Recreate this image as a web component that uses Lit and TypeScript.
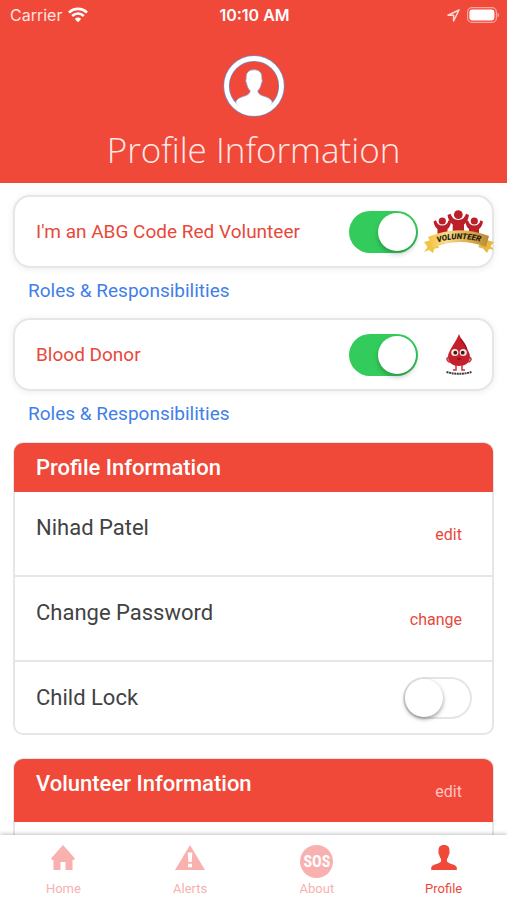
import { LitElement, html, css, svg, nothing } from "lit";
import { customElement, property, state } from "lit/decorators.js";
import { classMap } from "lit/directives/class-map.js";

const RED = css`#f04839`;

const wifiIcon = svg`<svg width="20" height="16" viewBox="0 0 20 16" fill="none" stroke="#fff" stroke-width="2.6" aria-hidden="true">
  <path d="M1 5.6C6 .6 14 .6 19 5.6"/>
  <path d="M4.2 9C7.600 5.600 12.400 5.600 15.800 9"/>
  <path d="M10 15.200 6.800 11.900C8.600 10.100 11.400 10.100 13.200 11.900Z" fill="#fff" stroke="none"/>
</svg>`;

const locationIcon = svg`<svg width="13" height="13" viewBox="0 0 13 13" fill="none" stroke="#ffd9d4" stroke-width="1.5" stroke-linejoin="round" aria-hidden="true">
  <path d="M12 1 1 6.200H6.600V12Z"/>
</svg>`;

const batteryIcon = svg`<svg width="32" height="16" viewBox="0 0 32 16" aria-hidden="true">
  <rect x=".6" y=".6" width="28.800" height="14.800" rx="4.400" fill="none" stroke="#f9a49c" stroke-width="1.2"/>
  <rect x="2.400" y="2.600" width="25" height="10.800" rx="2.800" fill="#fff"/>
  <path d="M30.500 5.600Q32 6.200 32 8T30.500 10.400Z" fill="#f9a49c"/>
</svg>`;

const avatarIcon = svg`<svg width="62" height="62" viewBox="0 0 62 62" aria-hidden="true">
  <circle cx="31" cy="31" r="27.500" fill="none" stroke="#6f8fd0" stroke-width="6.400"/>
  <path d="M12.500 48C13.200 44.500 16 42.800 20 41.600C24.500 40.200 27 38.800 27.200 35.800C25 33.600 24 31 23.600 28.200C22.600 27 22.500 25.200 23.200 24C22.600 17.800 25.600 14.800 31 14.800S39.400 17.800 38.800 24C39.500 25.200 39.400 27 38.400 28.200C38 31 37 33.600 34.800 35.800C35 38.800 37.500 40.200 42 41.600C46 42.800 48.800 44.500 49.500 48Q42 58 31 58T12.500 48Z" fill="#fff" stroke="#8f9fd6" stroke-width=".8"/>
  <circle cx="31" cy="31" r="27.500" fill="none" stroke="#fff" stroke-width="4.800"/>
</svg>`;

const volunteerLogo = svg`<svg width="70" height="44" viewBox="0 0 70 44" role="img" aria-label="Volunteer badge">
  <defs>
    <linearGradient id="gold" x1="0" x2="1">
      <stop offset="0" stop-color="#f3c443"/><stop offset=".3" stop-color="#f6dc8e"/>
      <stop offset=".65" stop-color="#dcb050"/><stop offset="1" stop-color="#b98a36"/>
    </linearGradient>
    <path id="band" d="M9 34Q34 24.500 61 33"/>
  </defs>
  <g fill="#bb1f28">
    <circle cx="34.300" cy="4.700" r="4.400"/>
    <circle cx="18.300" cy="11" r="3.600"/>
    <circle cx="50.300" cy="11" r="3.600"/>
    <path d="M23.500 5 26.500 3.800Q28.500 10 34.300 10T42 3.800L45 5Q44 11.500 40 14.500V24H28.700V14.500Q24.500 11.500 23.500 5Z"/>
    <path d="M9.500 11.500 12 10.200Q13.500 15.500 18.300 15.500T24.500 10.200L27 11.500Q26.500 17 23.500 19V26H13.500V19Q10.500 17 9.500 11.500Z"/>
    <path d="M59 11.500 56.500 10.200Q55 15.500 50.300 15.500T44 10.200L41.500 11.500Q42 17 45 19V26H55V19Q58 17 59 11.500Z"/>
  </g>
  <path d="M0 32 11 29 15 38 10.500 38.500 9 43 5 40 0 42 3.500 37Z" fill="#f3c443"/>
  <path d="M70 32 59 29 54 37 59 38.500 63 43 65 39 70 39.500 66.500 36Z" fill="#e8b93f"/>
  <path d="M4 27Q34 14 65 26L62 37Q34 26.500 9 38Z" fill="url(#gold)"/>
  <text class="badge-text"><textPath href="#band" startOffset="50%" text-anchor="middle">VOLUNTEER</textPath></text>
</svg>`;

const dropLogo = svg`<svg width="28" height="42" viewBox="0 0 28 42" role="img" aria-label="Blood donor mascot">
  <path d="M14 0C15.500 4 18 8 20.500 12C23 16 25 19.500 25 23C25 29 20 32 14 32S3 29 3 23C3 19.500 5 16 7.500 12C10 8 12.500 4 14 0Z" fill="#c4202e"/>
  <path d="M15.500 5Q21.500 12 21.500 16" fill="none" stroke="#9c1220" stroke-width="1.5"/>
  <path d="M4 23Q-.5 24.500 4.500 28.500M24 23Q28.500 24.500 23.500 28.500M11 31V36H8M17 31V36H20" fill="none" stroke="#c4323c" stroke-width="1.500"/>
  <circle cx="9.800" cy="18.500" r="3.600" fill="#f6e6df"/><circle cx="18.200" cy="18.500" r="3.600" fill="#f6e6df"/>
  <circle cx="10.300" cy="18.700" r="1.900" fill="#3b1a1c"/><circle cx="17.700" cy="18.700" r="1.900" fill="#3b1a1c"/>
  <path d="M12 24.500Q14 26 16 24.500" fill="none" stroke="#6f0d18" stroke-width="1"/>
  <path d="M1.500 38Q14 41.500 26.500 38" fill="none" stroke="#3c3c3c" stroke-width="2" stroke-dasharray="2 .6"/>
</svg>`;

const homeIcon = svg`<svg width="24" height="25" viewBox="0 0 24 25" fill="currentColor" aria-hidden="true">
  <path d="M12 0 24 13.500 22.800 15H21.500V25H14.500V17H9.500V25H2.500V15H1.200L0 13.500Z"/>
</svg>`;

const alertIcon = svg`<svg width="30" height="25" viewBox="0 0 30 25" aria-hidden="true">
  <path d="M15 0 30 25H0Z" fill="currentColor"/>
  <path d="M12.700 7.500H17.300L16.700 17H13.300ZM13 18.700H17V22.200H13Z" fill="#fff"/>
</svg>`;

const personIcon = svg`<svg width="26" height="25" viewBox="0 0 26 25" fill="currentColor" aria-hidden="true">
  <path d="M13 0C17 0 18.800 2.200 18.400 6C18.900 7.600 18.400 9 17.800 9.800C17.400 11.800 16.900 12.900 16 14V16.500C17.500 19 25.200 19.200 25.800 22.500V25H.2V22.500C.8 19.200 8.500 19 10 16.500V14C9.100 12.900 8.600 11.800 8.200 9.800C7.600 9 7.100 7.600 7.600 6C7.200 2.200 9 0 13 0Z"/>
</svg>`;

@customElement("toggle-switch")
class ToggleSwitch extends LitElement {
  @property() label = "";
  @property({ type: Boolean }) on = false;

  static styles = css`
    :host { display: block; flex: none; }
    .switch {
      appearance: none; display: block; box-sizing: border-box; margin: 0;
      width: 69px; height: 42px; padding: 2px; border-radius: 21px;
      background: #fff; box-shadow: inset 0 0 0 2px #e5e5e5; cursor: pointer;
    }
    .switch::before {
      content: ""; display: block; width: 38px; height: 38px; border-radius: 50%;
      background: #fff; box-shadow: 0 2px 4px rgba(0, 0, 0, 0.4);
    }
    .switch:checked { background: #33cc5c; box-shadow: none; }
    .switch:checked::before { margin-left: auto; box-shadow: 0 3px 5px rgba(0, 0, 0, 0.25); }
  `;

  render() {
    return html`<input class="switch" type="checkbox" role="switch" aria-label=${this.label}
      .checked=${this.on} @change=${(e: Event) => (this.on = (e.target as HTMLInputElement).checked)}>`;
  }
}

@customElement("app-root")
class AppRoot extends LitElement {
  @state() private tab = "Profile";

  static styles = css`
    :host {
      display: flex; flex-direction: column; height: 100vh; overflow: hidden;
      background: #fff; color: #424242; font-family: Roboto, sans-serif; font-size: 19px;
    }
    .header { flex: none; background: ${RED}; color: #fff; }
    .status {
      display: grid; grid-template-columns: 1fr auto 1fr; align-items: center;
      height: 30px; padding: 0 8px 0 10px;
      font: 500 16px/20px Inter, sans-serif;
    }
    .carrier { display: flex; align-items: center; gap: 6px; font-weight: 400; color: #ffe4e0; }
    .clock { font-weight: 600; }
    .indicators { display: flex; align-items: center; justify-content: flex-end; gap: 7px; }
    .hero { display: flex; flex-direction: column; align-items: center; padding: 25px 0 9px; }
    .title { margin: 8px 0 0; font: 300 35px/49px "Open Sans", sans-serif; color: #ffe9e6; }
    .content { flex: 1; min-height: 0; overflow: hidden; padding: 12px 13px 0; }
    .role {
      display: flex; align-items: center; box-sizing: border-box; height: 73px;
      padding-left: 21px; border: 2px solid #e6e6e6; border-radius: 17px;
      box-shadow: 0 1px 7px rgba(0, 0, 0, 0.08); color: #e8483c;
    }
    .role-name { flex: 1; }
    .logo { display: flex; justify-content: center; width: 70px; margin: 0 -2px 0 6px; }
    .badge-text { font: italic 900 8px Roboto, sans-serif; fill: #2a1d0c; }
    .roles-link { display: block; width: max-content; margin: 11px 0 15px 15px; line-height: 24px; color: #3f80e8; text-decoration: none; }
    .panel { border: 2px solid #e6e6e6; border-radius: 10px; margin-top: 23px; }
    .panel.first { margin-top: 16px; }
    .bar {
      display: flex; justify-content: space-between; align-items: flex-start;
      margin: -1px -1px 0; padding: 12px 31px 0 22px; height: 37px;
      background: ${RED}; color: #fff; border-radius: 9px 9px 0 0;
    }
    .bar.tall { height: 51px; }
    .heading { margin: 0; font-size: 22px; line-height: 26px; font-weight: 500; }
    .row {
      display: flex; justify-content: space-between; align-items: flex-start;
      box-sizing: border-box; height: 85px; padding: 22px 30px 0 21px;
      border-bottom: 2px solid #e6e6e6; font-size: 22px; line-height: 28px;
    }
    .row.last { height: 71px; padding: 0 20px 0 21px; align-items: center; border-bottom: 0; }
    .action {
      margin: 8px 0 0; padding: 0; border: 0; background: none; cursor: pointer;
      font: 16px/26px Roboto, sans-serif; color: #e8483c;
    }
    .bar .action { color: #ffc6c0; }
    .tabs {
      position: relative; flex: none; display: grid; grid-template-columns: repeat(4, 1fr);
      height: 65px; background: #fff; box-shadow: 0 -1px 4px rgba(0, 0, 0, 0.24);
    }
    .tab {
      display: flex; flex-direction: column; align-items: center; padding: 10px 0 0;
      border: 0; background: none; cursor: pointer;
      font: 13px/20px Roboto, sans-serif; color: #f8b1af;
    }
    .tab.active { color: ${RED}; }
    .tab-icon { display: flex; height: 34px; }
    .sos {
      display: flex; align-items: center; justify-content: center;
      width: 33px; height: 33px; border-radius: 50%; background: currentColor;
    }
    .sos-text { color: #fff; font: 700 16px/20px "Liberation Sans Narrow", "Roboto Condensed", Roboto, sans-serif; }
  `;

  private role(name: string, logo: unknown) {
    return html`
      <div class="role">
        <span class="role-name">${name}</span>
        <toggle-switch label=${name} on></toggle-switch>
        <span class="logo">${logo}</span>
      </div>
      <a class="roles-link" href="#roles">Roles &amp; Responsibilities</a>`;
  }

  private row(name: string, action: string) {
    return html`<div class="row"><span>${name}</span>
      <button class="action" aria-label="${action} ${name}">${action}</button></div>`;
  }

  render() {
    const tabs: [string, unknown][] = [
      ["Home", homeIcon],
      ["Alerts", alertIcon],
      ["About", html`<span class="sos"><span class="sos-text">SOS</span></span>`],
      ["Profile", personIcon],
    ];
    return html`
      <header class="header">
        <div class="status">
          <span class="carrier">Carrier ${wifiIcon}</span>
          <span class="clock">10:10 AM</span>
          <span class="indicators">${locationIcon}${batteryIcon}</span>
        </div>
        <div class="hero">
          ${avatarIcon}
          <h1 class="title">Profile Information</h1>
        </div>
      </header>
      <main class="content">
        ${this.role("I'm an ABG Code Red Volunteer", volunteerLogo)}
        ${this.role("Blood Donor", dropLogo)}
        <section class="panel first">
          <div class="bar"><h2 class="heading">Profile Information</h2></div>
          ${this.row("Nihad Patel", "edit")}
          ${this.row("Change Password", "change")}
          <div class="row last"><span>Child Lock</span><toggle-switch label="Child Lock"></toggle-switch></div>
        </section>
        <section class="panel">
          <div class="bar tall">
            <h2 class="heading">Volunteer Information</h2>
            <button class="action">edit</button>
          </div>
          <div class="row"></div>
        </section>
      </main>
      <nav class="tabs">
        ${tabs.map(([name, icon]) => html`
          <button class=${classMap({ tab: true, active: this.tab === name })}
            aria-current=${this.tab === name ? "page" : nothing}
            @click=${() => (this.tab = name)}>
            <span class="tab-icon">${icon}</span>${name}
          </button>`)}
      </nav>`;
  }
}
